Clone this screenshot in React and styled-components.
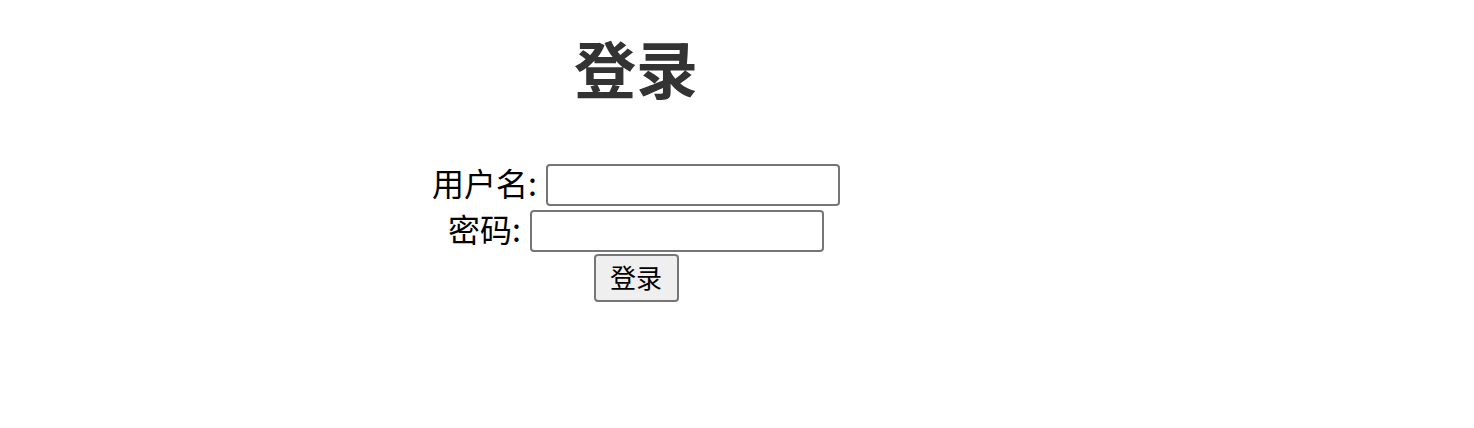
import React from 'react';
import styled, { createGlobalStyle } from 'styled-components';

const GlobalStyle = createGlobalStyle`
  body {
    margin: 0;
    background: #fff;
    font-family: "Noto Sans CJK SC", "Noto Sans", sans-serif;
  }
`;

const Page = styled.div`
  width: 1272px;
  display: flex;
  flex-direction: column;
  align-items: center;
  padding-top: 22px;
`;

const Title = styled.h1`
  margin: 0 0 50px;
  font-size: 62px;
  font-weight: 700;
  line-height: 90px;
  color: #333;
`;

const Form = styled.form`
  display: flex;
  flex-direction: column;
  align-items: center;
`;

const Row = styled.div`
  display: flex;
  align-items: center;
  gap: 9px;
  height: 46px;
`;

const Label = styled.label`
  font-size: 32px;
  line-height: 40px;
  padding-bottom: 6px;
  color: #000;
`;

const Input = styled.input`
  box-sizing: border-box;
  width: 294px;
  height: 42px;
  border: 2px solid #767676;
  border-radius: 4px;
  padding: 0 6px;
  font-size: 24px;
`;

const Button = styled.button`
  box-sizing: border-box;
  width: 85px;
  height: 48px;
  background: #efefef;
  border: 2px solid #767676;
  border-radius: 4px;
  font-family: inherit;
  font-size: 26px;
  color: #000;
  padding: 0 0 3px;
`;

export default function App() {
  return (
    <>
      <GlobalStyle />
      <Page>
        <Title>登录</Title>
        <Form onSubmit={(e) => e.preventDefault()}>
          <Row>
            <Label>用户名:</Label>
            <Input type="text" />
          </Row>
          <Row>
            <Label>密码:</Label>
            <Input type="password" />
          </Row>
          <Button type="submit">登录</Button>
        </Form>
      </Page>
    </>
  );
}
